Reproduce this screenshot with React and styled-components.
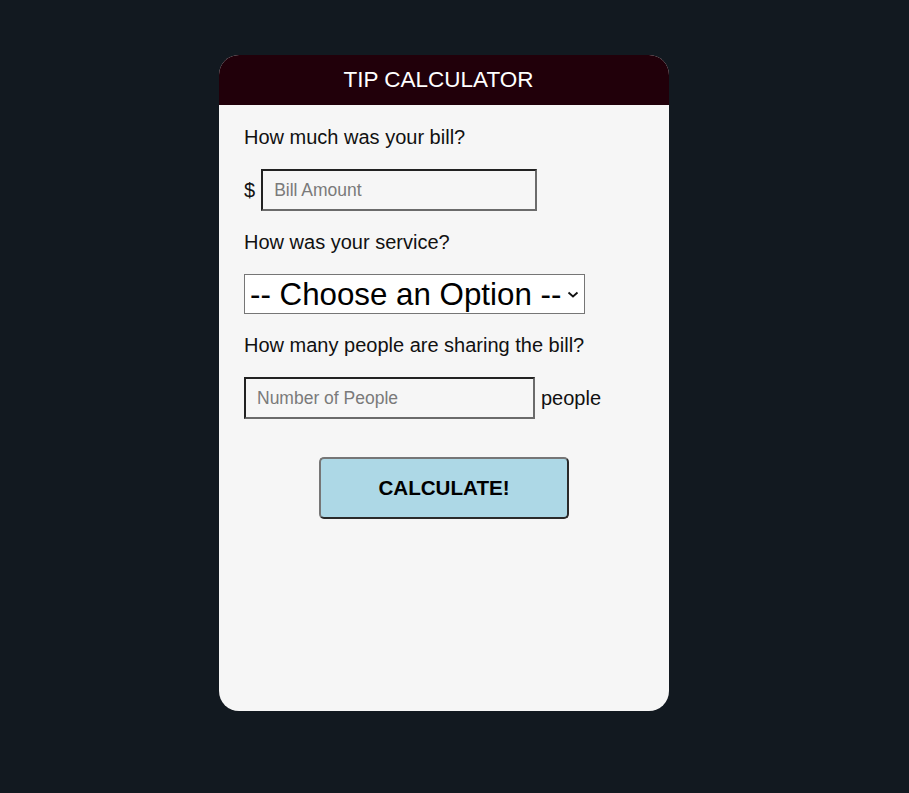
import React from "react";
import styled, { createGlobalStyle } from "styled-components";

const Global = createGlobalStyle`
  html, body { margin: 0; padding: 0; }
  body {
    background: #121920;
    font-family: "Liberation Sans", Arial, sans-serif;
    min-height: 793px;
  }
`;

const Page = styled.div`
  display: flex;
  justify-content: flex-start;
  padding: 55px 0 0 219px;
`;

const Card = styled.div`
  width: 450px;
  height: 656px;
  background: #f6f6f6;
  border-radius: 20px;
  overflow: hidden;
  display: flex;
  flex-direction: column;
`;

const Header = styled.div`
  height: 50px;
  background: #21000a;
  color: #ffffff;
  display: flex;
  align-items: center;
  justify-content: center;
  padding-right: 11px;
  font-size: 22.5px;
`;

const Body = styled.div`
  padding: 21px 25px 0;
  display: flex;
  flex-direction: column;
  align-items: flex-start;
`;

const Label = styled.p`
  margin: 0 0 21px;
  font-size: 20px;
  line-height: 22px;
  color: #111;
`;

const Row = styled.div`
  display: flex;
  align-items: center;
  gap: 6px;
  margin-bottom: ${(p) => p.$after}px;
  font-size: 20px;
  color: #111;
`;

const TextInput = styled.input`
  box-sizing: border-box;
  width: ${(p) => p.$w}px;
  height: 42px;
  padding: 0 11px;
  font-family: "Liberation Sans", Arial, sans-serif;
  font-size: 17.5px;
  background: transparent;
  border-width: 2px;
  border-style: solid;
  border-color: #222 #6b6b6b #6b6b6b #222;
  outline: none;
  &::placeholder { color: #7a7a7a; }
`;

const SelectWrap = styled.div`
  position: relative;
  width: 341px;
  height: 40px;
  margin-bottom: 20px;
`;

const Select = styled.select`
  box-sizing: border-box;
  appearance: none;
  -webkit-appearance: none;
  width: 100%;
  height: 100%;
  padding: 0 0 0 5px;
  font-family: "Liberation Sans", Arial, sans-serif;
  font-size: 31.3px;
  color: #000;
  background: #fff;
  border: 1px solid #767676;
  border-radius: 0;
  outline: none;
`;

const Chevron = styled.svg`
  position: absolute;
  right: 6px;
  top: 17px;
  width: 12px;
  height: 7px;
  pointer-events: none;
`;

const ButtonWrap = styled.div`
  align-self: stretch;
  display: flex;
  justify-content: center;
  margin-top: 38px;
`;

const Button = styled.button`
  width: 250px;
  height: 62px;
  background: #add8e6;
  border-width: 2px;
  border-style: solid;
  border-color: #767676 #2a2a2a #2a2a2a #767676;
  border-radius: 5px;
  font-family: "Liberation Sans", Arial, sans-serif;
  font-weight: bold;
  font-size: 20.6px;
  color: #000;
  cursor: pointer;
`;

export default function App() {
  return (
    <>
      <Global />
      <Page>
        <Card>
          <Header>TIP CALCULATOR</Header>
          <Body>
            <Label>How much was your bill?</Label>
            <Row $after={20}>
              <span>$</span>
              <TextInput $w={276} type="text" placeholder="Bill Amount" />
            </Row>
            <Label>How was your service?</Label>
            <SelectWrap>
              <Select defaultValue="0">
                <option value="0">-- Choose an Option --</option>
                <option value="0.3">30% - Outstanding</option>
                <option value="0.2">20% - Good</option>
                <option value="0.15">15% - It was OK</option>
                <option value="0.1">10% - Bad</option>
                <option value="0.05">5% - Terrible</option>
              </Select>
              <Chevron viewBox="0 0 12 7">
                <path d="M1.5 1.5 L6 5.5 L10.5 1.5" fill="none" stroke="#111" strokeWidth="1.8" />
              </Chevron>
            </SelectWrap>
            <Label>How many people are sharing the bill?</Label>
            <Row $after={0}>
              <TextInput $w={291} type="text" placeholder="Number of People" />
              <span>people</span>
            </Row>
            <ButtonWrap>
              <Button>CALCULATE!</Button>
            </ButtonWrap>
          </Body>
        </Card>
      </Page>
    </>
  );
}
